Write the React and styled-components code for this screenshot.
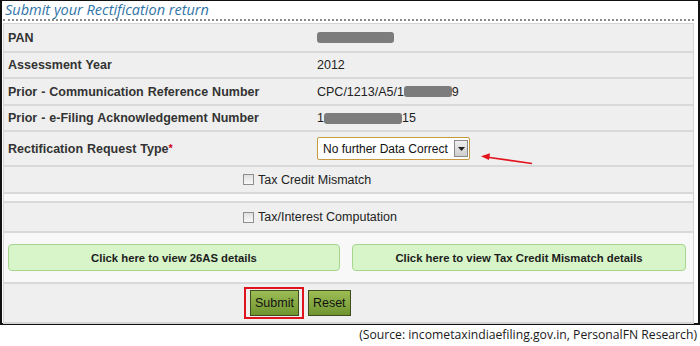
import React from 'react';
import styled, { createGlobalStyle } from 'styled-components';

const GlobalStyle = createGlobalStyle`
  html, body {
    margin: 0;
    padding: 0;
    background: #ffffff;
  }
  body {
    font-family: "Liberation Sans", Arial, sans-serif;
  }
`;

const Frame = styled.div`
  width: 700px;
  height: 325px;
  box-sizing: border-box;
  border: 2px solid #111;
  border-top-width: 1px;
  padding: 0 4px 0 1px;
  background: #fff;
`;

const Title = styled.h2`
  margin: 0;
  height: 18px;
  padding-left: 2px;
  font-family: "Open Sans", "DejaVu Sans", sans-serif;
  font-style: italic;
  font-weight: 400;
  font-size: 14.5px;
  line-height: 17px;
  color: #2f74a8;
  border-bottom: 2px dotted #8a8a8a;
`;

const Table = styled.div`
  margin-top: 2px;
  border: 1px solid #d4d4d4;
  border-bottom-width: 2px;
  background: #efefef;
`;

const Row = styled.div`
  display: grid;
  grid-template-columns: 309px 1fr;
  align-items: center;
  height: ${p => p.$h}px;
  box-sizing: border-box;
  border-top: ${p => (p.$first ? 'none' : '2px solid #d9d9d9')};
  background: #efefef;
  font-size: 12.5px;
  color: #222;
`;

const Label = styled.div`
  padding-left: 4px;
  font-weight: bold;
  font-size: 12.5px;
  word-spacing: 0.5px;
  color: #333;
`;

const Value = styled.div`
  position: relative;
  padding-left: 4px;
  display: flex;
  align-items: center;
`;

const Mask = styled.span`
  display: inline-block;
  width: ${p => p.$w}px;
  height: 11px;
  border-radius: 3px;
  background: #7c7c7c;
`;

const Star = styled.span`
  color: #d0021b;
  font-size: 11px;
  vertical-align: top;
`;

const SelectWrap = styled.div`
  display: flex;
  align-items: center;
  width: 153px;
  height: 23px;
  box-sizing: border-box;
  border: 1px solid #c79a3d;
  border-radius: 2px;
  background: #fff;
  padding-left: 5px;
  font-size: 12px;
  color: #111;
`;

const SelectText = styled.span`
  flex: 1;
  white-space: nowrap;
`;

const DropBtn = styled.span`
  width: 14px;
  height: 17px;
  margin-right: 1px;
  box-sizing: border-box;
  border: 1px solid #8a8a8a;
  background: linear-gradient(#f0f0f0, #cdcdcd);
  display: flex;
  align-items: center;
  justify-content: center;
`;

const Arrow = styled.svg`
  position: absolute;
  left: 168px;
  top: 16px;
  overflow: visible;
`;

const CheckRow = styled.div`
  display: flex;
  align-items: center;
  gap: 4px;
  height: ${p => p.$h}px;
  box-sizing: border-box;
  padding-left: 239px;
  border-top: 2px solid #d9d9d9;
  background: #efefef;
  font-size: 12.5px;
  color: #222;
`;

const Box = styled.span`
  width: 11px;
  height: 11px;
  box-sizing: border-box;
  border: 1px solid #8e8e8e;
  background: linear-gradient(#e0e0e0, #f8f8f8);
`;

const Spacer = styled.div`
  height: 9px;
  box-sizing: border-box;
  border-top: 2px solid #d9d9d9;
  background: #f8f8f8;
`;

const ButtonsRow = styled.div`
  display: grid;
  grid-template-columns: 332px 334px;
  justify-content: space-between;
  align-items: center;
  height: 51px;
  box-sizing: border-box;
  padding: 0 7px 0 4px;
  border-top: 2px solid #d9d9d9;
  background: #f8f8f8;
`;

const LinkButton = styled.button`
  height: 27px;
  border: 1px solid #a6d68e;
  border-radius: 4px;
  background: #d7f5c8;
  font-family: "Liberation Sans", Arial, sans-serif;
  font-weight: bold;
  font-size: 11.3px;
  color: #1d1d1d;
  cursor: pointer;
`;

const ActionRow = styled.div`
  display: flex;
  align-items: center;
  gap: 4px;
  height: 40px;
  box-sizing: border-box;
  padding-left: 240px;
  border-top: 2px solid #d9d9d9;
  background: #efefef;
`;

const Highlight = styled.div`
  display: flex;
  padding: 1px 3px 1px 4px;
  border: 2px solid #e0141e;
`;

const ActionButton = styled.button`
  height: 26px;
  padding: 0 4px;
  border: 1px solid #3f4d1c;
  background: linear-gradient(#9dbd55, #6f9430);
  font-family: "Liberation Sans", Arial, sans-serif;
  font-size: 12.5px;
  color: #111;
  cursor: pointer;
`;

const Caption = styled.div`
  text-align: right;
  padding: 1px 3px 0 0;
  font-family: "Open Sans", "DejaVu Sans", sans-serif;
  font-size: 12.2px;
  color: #1a1a1a;
`;

export default function App() {
  return (
    <>
      <GlobalStyle />
      <Frame>
        <Title>Submit your Rectification return</Title>
        <Table>
          <Row $h={27} $first>
            <Label>PAN</Label>
            <Value><Mask $w={77} /></Value>
          </Row>
          <Row $h={26}>
            <Label>Assessment Year</Label>
            <Value>2012</Value>
          </Row>
          <Row $h={27}>
            <Label>Prior - Communication Reference Number</Label>
            <Value>CPC/1213/A5/1<Mask $w={48} />9</Value>
          </Row>
          <Row $h={26}>
            <Label>Prior - e-Filing Acknowledgement Number</Label>
            <Value>1<Mask $w={78} />15</Value>
          </Row>
          <Row $h={35}>
            <Label>Rectification Request Type<Star>*</Star></Label>
            <Value>
              <SelectWrap>
                <SelectText>No further Data Correct</SelectText>
                <DropBtn>
                  <svg width="7" height="4" viewBox="0 0 7 4">
                    <path d="M0 0h7L3.5 4z" fill="#222" />
                  </svg>
                </DropBtn>
              </SelectWrap>
              <Arrow width="52" height="12">
                <line x1="5" y1="4" x2="51" y2="10.5" stroke="#e3141e" strokeWidth="1.6" />
                <path d="M0 3.2L9 0.2L8 7z" fill="#e3141e" />
              </Arrow>
            </Value>
          </Row>
          <CheckRow $h={27}>
            <Box />
            Tax Credit Mismatch
          </CheckRow>
          <Spacer />
          <CheckRow $h={30}>
            <Box />
            Tax/Interest Computation
          </CheckRow>
          <ButtonsRow>
            <LinkButton>Click here to view 26AS details</LinkButton>
            <LinkButton>Click here to view Tax Credit Mismatch details</LinkButton>
          </ButtonsRow>
          <ActionRow>
            <Highlight>
              <ActionButton>Submit</ActionButton>
            </Highlight>
            <ActionButton>Reset</ActionButton>
          </ActionRow>
        </Table>
      </Frame>
      <Caption>(Source: incometaxindiaefiling.gov.in, PersonalFN Research)</Caption>
    </>
  );
}
